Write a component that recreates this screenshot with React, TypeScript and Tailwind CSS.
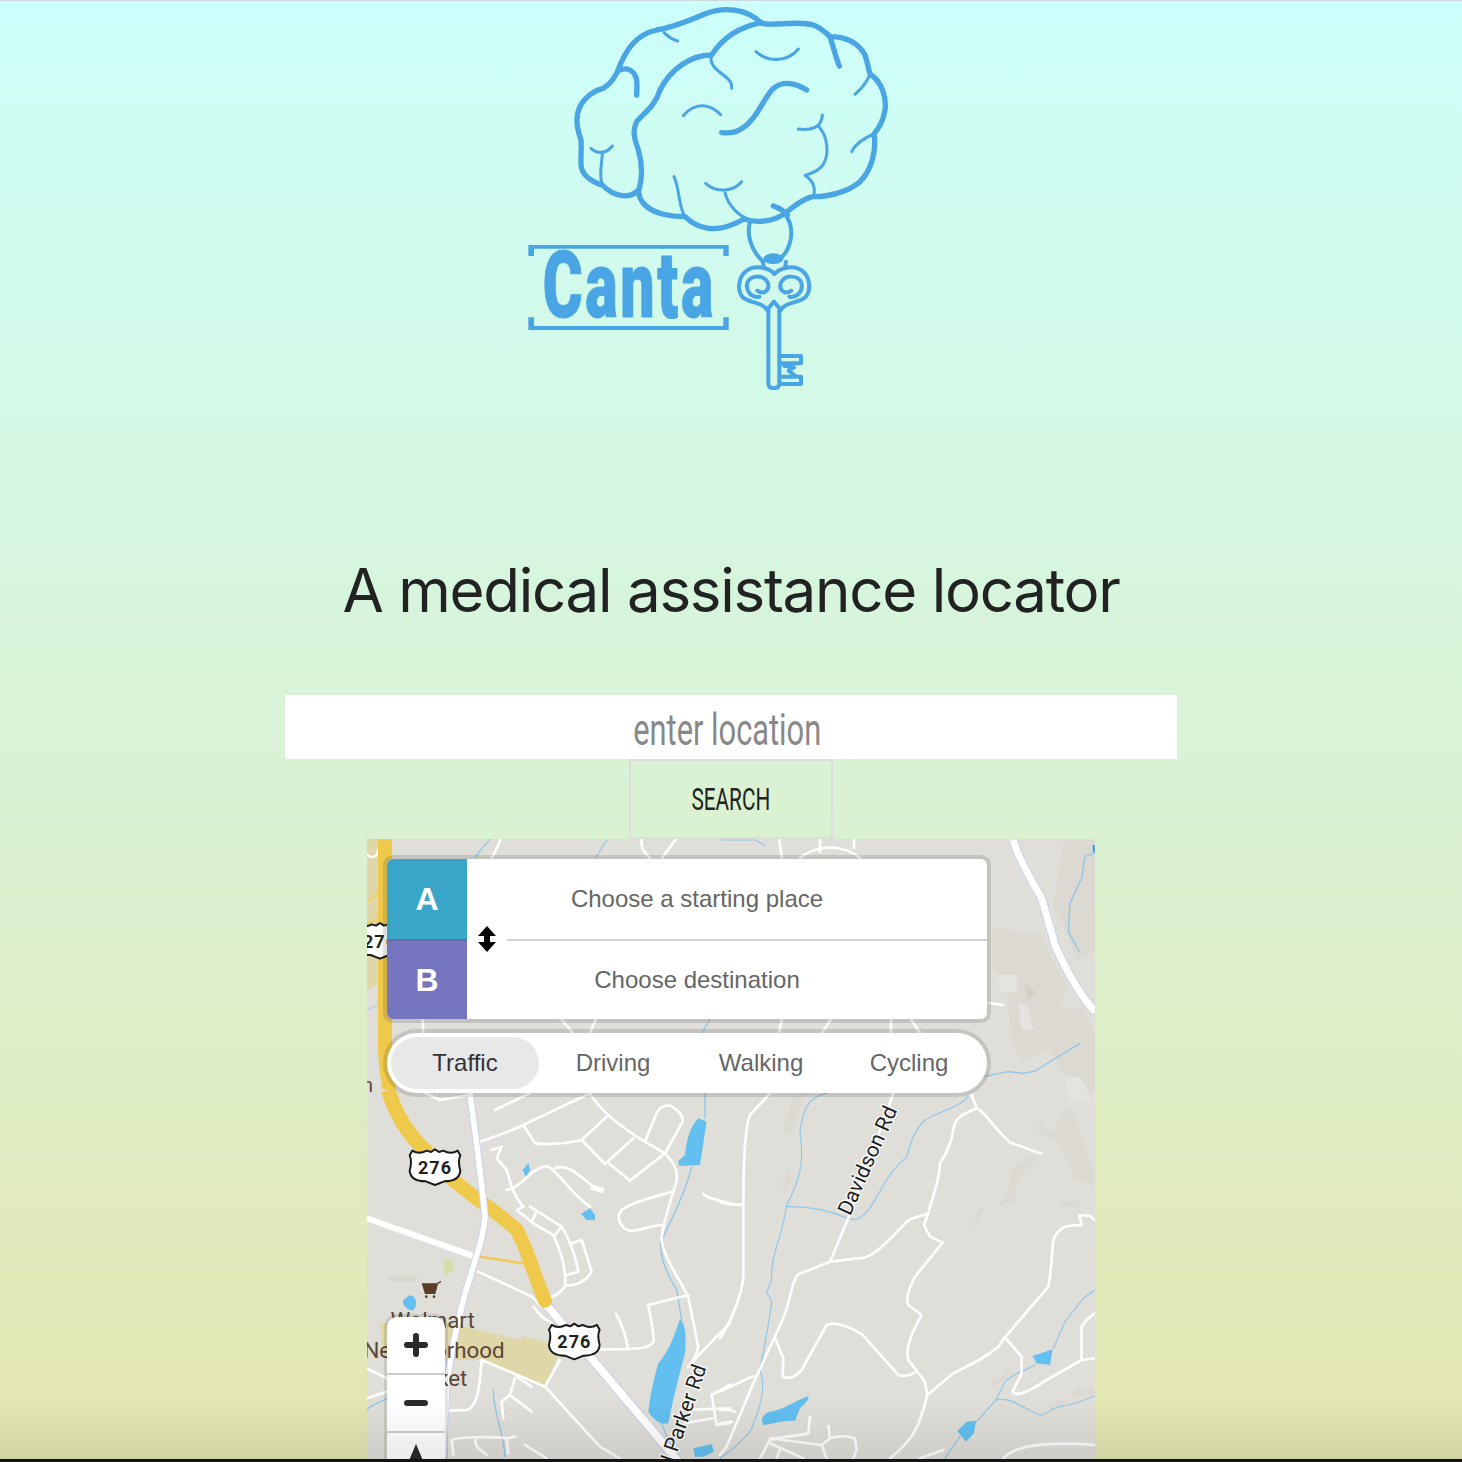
const BLUE = "#4aa5e5";

// paths below are traced in the coordinates of 3x crops, the <g> scales them back
const thickBrain = [
  "M245 555 C215 545 185 525 183 495 C182 470 185 440 183 420 C170 385 165 350 180 320 C195 290 225 270 250 265 C275 250 290 225 300 195 C320 150 345 105 410 90 C470 80 510 60 560 40 C610 20 680 25 725 70 C760 80 830 60 880 75 C905 85 920 100 930 110 C970 110 1010 120 1035 165 C1042 185 1045 205 1050 222 C1085 245 1100 290 1095 330 C1090 365 1075 385 1062 402 C1070 450 1055 510 1020 545 C985 575 930 590 880 590 C850 595 820 620 795 640 C760 665 710 670 672 657 C640 675 600 690 565 685 C530 680 510 665 495 650 C450 650 400 640 375 615 C360 600 358 590 355 570 C335 595 285 595 247 555",
  "M725 68 C660 80 610 110 575 165 C510 165 450 210 420 270 C405 320 370 340 350 365 C335 395 345 420 355 450 C370 500 365 540 357 570",
  "M930 110 C940 140 948 175 958 198",
  "M300 210 C325 200 345 215 350 240 C352 260 350 270 350 285",
  "M860 270 C830 250 790 240 760 265 C730 295 720 340 680 375 C650 400 630 400 605 398",
  "M760 618 C780 625 795 635 802 645",
];

const thinBrain = [
  "M575 165 C565 190 590 210 610 225 C630 240 637 250 635 265",
  "M1050 222 C1040 250 1020 270 1005 283",
  "M1062 402 C1030 415 1005 435 995 455",
  "M432 98 C445 110 460 120 473 123",
  "M708 155 C740 185 800 190 835 147",
  "M490 347 C525 305 570 310 602 344",
  "M835 387 C870 392 905 385 907 345",
  "M895 378 C925 410 930 470 905 500 C890 515 870 522 855 526 C875 540 890 560 880 590",
  "M462 530 C480 570 475 620 495 650",
  "M557 550 C590 580 640 575 665 545",
  "M615 578 C625 620 660 650 690 660",
  "M213 445 C235 465 260 460 277 438",
  "M247 455 C247 490 235 520 247 555",
];

const keyLines = [
  "M690 665 C680 700 690 750 730 785",
  "M800 650 C825 690 815 750 775 780",
  "M733 805 L728 785",
  "M795 805 L798 785",
  "M763 822 C745 800 700 795 680 812 C655 830 650 870 668 892 C690 910 730 905 745 935",
  "M763 822 C782 800 825 795 846 812 C870 830 875 870 856 892 C835 910 795 905 778 935",
  "M718 890 C692 895 676 870 682 848 C692 825 732 822 744 850 C750 872 730 885 712 872",
  "M808 890 C834 895 850 870 844 848 C834 825 794 822 782 850 C776 872 796 885 814 872",
  "M745 925 L745 1150 Q745 1165 762 1165 Q778 1165 778 1150 L778 925 L762 905 Z",
  "M778 1068 H843 V1090 H778",
  "M778 1130 H843 V1152 H778",
  "M792 1097 L822 1102 L806 1112 L826 1128",
];

function Logo() {
  return (
    <svg viewBox="0 3 1140 1197" className="ml-[520px] block h-[399px] w-[380px]" fill="none" stroke={BLUE} strokeLinecap="round" strokeLinejoin="round">
      {thickBrain.map((d) => (
        <path key={d} d={d} strokeWidth={16} />
      ))}
      {thinBrain.map((d) => (
        <path key={d} d={d} strokeWidth={9} />
      ))}
      {keyLines.map((d) => (
        <path key={d} d={d} strokeWidth={12} />
      ))}
      <ellipse cx={760} cy={776} rx={30} ry={16} fill={BLUE} stroke="none" />
      <path d="M25 768 V735 H626 V768 H610 V746 H42 V768 Z" fill={BLUE} stroke="none" />
      <path d="M25 952 V990 H626 V952 H610 V978 H42 V952 Z" fill={BLUE} stroke="none" />
      <text
        x={68}
        y={952}
        textLength={520}
        lengthAdjust="spacingAndGlyphs"
        fontSize={276}
        fontWeight={900}
        letterSpacing={12}
        fontFamily="Roboto, sans-serif"
        fill={BLUE}
        stroke={BLUE}
        strokeWidth={3}
      >
        Canta
      </text>
    </svg>
  );
}

const roadsLeft = [
  "M360 155 C420 135 480 110 490 105 L690 10",
  "M490 105 L525 160 C570 165 620 160 665 150 L740 80",
  "M665 150 L735 222 L820 145",
  "M690 10 C720 60 780 110 855 155 L915 190 C940 215 955 240 950 270 C945 300 905 400 905 450 C910 500 960 570 985 620 L1015 770 C1010 800 1000 810 985 830",
  "M855 155 L890 70 C900 50 915 45 930 47 C955 60 970 75 968 95 L915 190",
  "M915 190 L810 272 L745 218",
  "M940 305 C880 320 810 340 785 360 C765 385 785 420 815 423 C850 420 880 405 905 405",
  "M1030 312 C1050 330 1080 330 1110 340",
  "M865 645 L985 615",
  "M865 645 C875 700 885 745 880 755 C870 775 850 778 720 778",
  "M768 672 C790 710 800 750 805 778",
  "M395 180 L425 170 L410 205 L440 240 C450 270 455 310 490 350 L470 360 L520 400 L580 435 C600 480 620 530 615 590 C600 610 580 620 565 625",
  "M440 300 C490 290 510 235 560 228 C600 245 620 300 690 350",
  "M585 235 C620 220 650 250 700 290 L730 297 L725 305 L695 295",
  "M510 350 L605 410 L585 435",
  "M605 410 C630 450 650 510 655 545 L620 555",
  "M635 460 L665 450 L695 545 C680 575 640 590 618 585",
  "M530 365 L515 395",
  "M355 545 L515 620 L545 650",
  "M520 650 L545 680 L575 700",
  "M555 890 L600 810",
  "M365 810 L555 890 L720 1070 L780 1105",
  "M365 810 C360 880 355 950 320 960 L265 962",
  "M470 860 L515 890",
  "M465 865 L450 915 L425 935 L430 985",
  "M450 915 L515 965",
  "M20 835 L80 865",
  "M20 925 L80 905",
  "M280 1095 L275 1050 C300 1040 400 1040 440 1045 L465 1040",
  "M345 1045 L350 1070 L380 1095",
  "M440 1045 L445 1090",
  "M495 1065 L560 1105",
  "M1110 700 C1080 730 1020 790 985 830",
  "M1055 915 L1110 885",
  "M1055 915 L1070 1005 L1110 1000",
  "M965 960 L1110 955",
  "M975 1000 L1060 985",
];

const riversLeft = [
  "M1035 10 L1035 85",
  "M995 230 C980 300 930 400 905 450 C895 490 920 550 950 600 L965 690",
  "M905 1000 C920 1040 930 1060 960 1100",
  "M400 900 C400 970 430 1020 435 1100",
  "M20 960 C40 940 80 930 80 925",
];

const lakesLeft = [
  "M1015 85 L1040 95 L1020 225 L958 228 L955 212 L975 195 C980 150 990 110 1015 85Z",
  "M505 220 L510 240 L498 260 L488 240Z",
  "M690 355 L705 375 L705 390 L680 390 L663 372Z",
  "M150 615 C170 620 175 645 160 660 C140 665 125 640 130 630Z",
  "M960 688 C975 700 980 730 975 790 C965 830 945 900 925 1000 C895 1005 880 985 865 965 C870 920 880 870 895 820 C930 780 945 730 960 688Z",
  "M1000 1075 L1055 1062 L1062 1085 L1030 1100 L1005 1100Z",
];

const roadsRight = [
  "M150 10 L90 75 C75 110 70 200 70 345 L70 560 C65 620 30 700 0 745",
  "M0 335 C25 345 50 343 70 345",
  "M520 10 L385 385 L330 515",
  "M330 515 L435 503 C490 480 530 420 570 388 L625 370 C640 310 660 270 660 220 C680 190 695 160 700 120 C705 90 710 80 770 55 C790 60 810 100 870 158 C900 165 940 185 965 190",
  "M770 55 L755 15",
  "M625 370 L612 405 L630 440 L668 458 L585 560 C565 600 555 630 565 645 L605 675 C580 720 555 770 565 810 L615 875 L622 915 C600 1000 590 1040 510 1105",
  "M330 515 L235 553 C215 570 215 620 190 685 L100 880 L20 1070 L0 1095",
  "M165 745 L190 805 L188 860 C210 870 225 860 245 840 L320 705 C340 695 370 700 425 732 L535 855 C550 860 565 860 585 848",
  "M622 915 L700 850 C760 820 800 800 835 770 L855 742 L985 590 C995 540 995 490 1000 450 C1015 410 1040 405 1085 405 L1078 375 L1110 378 L1125 390",
  "M855 742 L905 800 L905 850 L878 905 C890 920 920 910 980 870 L1085 810 L1125 805",
  "M1085 810 L1085 710 C1095 690 1110 680 1125 670",
  "M0 905 L95 860 L105 860",
  "M0 960 C25 960 40 960 45 965",
  "M0 1000 L35 995",
  "M120 1105 L150 1050 C200 1035 240 1040 265 1030 L270 980",
  "M150 1045 L305 1065 L330 1045 C360 1035 390 1040 405 1045 L410 1080 L400 1105",
  "M305 1065 L320 1105",
  "M330 1045 L325 1008",
  "M150 1060 L250 1105",
  "M180 1080 L170 1105",
  "M850 1105 C890 1060 1000 1055 1125 1065",
  "M600 1105 L670 1080",
];

const riversRight = [
  "M320 10 C270 20 250 50 240 125 C250 200 250 250 200 345 C190 430 150 500 155 570 L140 605 L155 635 C145 720 130 780 120 840 C140 890 120 960 90 1025 C60 1060 30 1085 0 1105",
  "M200 350 C260 348 320 360 370 380 C400 395 420 390 440 365 C480 320 490 260 560 200 C570 170 575 130 615 90 C660 65 720 50 745 20",
  "M1125 600 L1090 625 L1035 695 L1000 775",
  "M945 825 C920 840 880 850 855 875 L828 930 L765 1000",
  "M720 1040 L675 1105",
  "M828 930 C870 920 900 950 960 975 C985 975 985 955 1020 950 C1060 945 1090 930 1125 918",
];

const lakesRight = [
  "M265 918 C270 930 250 945 240 955 L225 993 C190 990 150 1005 130 1005 C120 990 130 970 150 965 C190 960 220 935 265 918Z",
  "M938 798 L998 778 L990 825 L968 822 L950 820Z",
  "M712 1023 L740 995 L768 992 L762 1030 L738 1055Z",
];

const patchesRight = [
  "M220 20 L255 10 L215 130 L190 125Z",
  "M210 235 L185 280 L195 315 L212 270Z",
  "M960 195 L930 200 L875 240 L860 320 L830 350 L880 340 L895 270Z",
  "M805 350 L775 355 L760 410 L740 425 L770 415 L785 370Z",
  "M1020 340 L1080 330 L1075 345 L1020 355Z",
  "M860 845 L815 880 L820 895 L860 860Z",
  "M1055 905 L1125 890 V915 L1060 922Z",
  "M975 935 L1040 930 V945 L985 950Z",
  "M940 90 L1000 130 L1030 60 L1060 60 L1090 160 L1125 260 V290 L1060 260 L1020 160 L960 130Z",
];

// top strip and gaps round the panels, in page coordinates
const roadsTop = [
  "M501 839 L492 858",
  "M676 839 L662 858",
  "M642 839 C640 848 644 852 650 858",
  "M779 839 L782 858",
  "M820 839 L820 852",
  "M854 839 L854 848",
  "M800 858 C815 846 840 842 860 858",
  "M561 1019 L573 1033",
  "M596 1019 L590 1033",
  "M423 1019 V1033",
  "M782 1019 L779 1033",
  "M831 1019 L822 1033",
  "M891 1019 V1033",
  "M911 1019 L920 1033",
  "M989 1003 L1003 1005",
  "M530 1093 L495 1110",
  "M425 1093 L440 1100 L470 1095",
  "M367 855 C374 860 378 855 378 850",
];

function Shield({ x, y, label }: { x: number; y: number; label: string }) {
  return (
    <g transform={`translate(${x} ${y})`}>
      <path
        d="M-68 -50 C-55 -42 -40 -42 -25 -50 L-12 -46 L0 -54 L12 -46 L25 -50 C40 -42 55 -42 68 -50 L76 -36 C68 -20 72 -5 76 10 C74 35 50 42 28 42 L0 53 L-28 42 C-50 42 -74 35 -76 10 C-72 -5 -68 -20 -76 -36Z"
        fill="#fff"
        stroke="#1a1a1a"
        strokeWidth={6}
        strokeLinejoin="round"
      />
      <text x={0} y={20} textAnchor="middle" fontSize={54} fontWeight={700} letterSpacing={3} fontFamily="Roboto, sans-serif" fill="#1f1f1f">
        {label}
      </text>
    </g>
  );
}

function MapCanvas() {
  return (
    <svg viewBox="367 839 728 623" className="absolute inset-0 h-full w-full" fill="none" strokeLinecap="round" strokeLinejoin="round">
      <rect x={367} y={839} width={728} height={623} fill="#e0ded9" />

      <g transform="translate(980 835) scale(0.3333)">
        <path d="M40 280 L70 280 L120 300 L180 290 L210 360 L260 450 L240 520 L310 520 L345 600 V760 L300 800 L250 720 L210 640 L130 680 L100 640 L80 480 L40 400Z" fill="#dbd9d1" />
        <path d="M250 15 L345 15 V350 L290 380 L245 260 L220 220 L240 90Z" fill="#dbd9d1" />
        <path d="M45 420 H110 V470 H60Z M115 505 H140 L160 585 H125Z M255 725 H300 L340 800 H270Z" fill="#e4e3df" />
        <path d="M135 450 L168 470 L145 495Z" fill="#d2cfc4" />
        <path d="M340 55 L315 65 L305 130 L270 205 L265 290 L298 350" stroke="#8fc5e6" strokeWidth={4} />
        <path d="M300 625 L165 708 L130 715 L85 710 L0 727" stroke="#8fc5e6" strokeWidth={4} />
        <path d="M100 15 C110 60 150 130 185 190 L225 330 C260 410 300 480 345 530" stroke="#cdd3e8" strokeWidth={27} strokeLinecap="butt" />
        <path d="M100 15 C110 60 150 130 185 190 L225 330 C260 410 300 480 345 530" stroke="#fff" strokeWidth={21} strokeLinecap="butt" />
        <path d="M338 30 L345 30 V55 L338 50Z" fill="#4aa3ee" />
      </g>

      <path d="M367 839 H378 V985 L367 990Z" fill="#e0d7a8" />
      <path d="M367 1010 L385 1002" stroke="#9cc8e6" strokeWidth={1} />
      <path d="M367 900 C373 900 378 895 378 890 M367 924 L378 918" stroke="#f3cf5f" strokeWidth={2} />

      <g transform="translate(360 1090) scale(0.3333)">
        <path d="M60 700 L270 700 L480 750 L490 738 L605 770 L555 890 L365 810 L260 810 L70 790Z" fill="#dfd7a7" />
        <path d="M250 510 L275 510 L285 535 L255 560Z" fill="#d5dca8" />
        <path d="M80 560 H180 L160 575 H100Z" fill="#d8d5cb" />
        {riversLeft.map((d) => (
          <path key={d} d={d} stroke="#8cc6ea" strokeWidth={4} />
        ))}
        {lakesLeft.map((d) => (
          <path key={d} d={d} fill="#62bff0" />
        ))}
        {roadsLeft.map((d) => (
          <path key={d} d={d} stroke="#fff" strokeWidth={8} />
        ))}
        <path d="M555 640 L960 1120" stroke="#cdd3e8" strokeWidth={30} />
        <path d="M555 640 L960 1120" stroke="#fff" strokeWidth={23} />
        <path d="M20 385 L345 500" stroke="#fff" strokeWidth={18} strokeLinecap="butt" />
        <path d="M358 500 L490 520" stroke="#efc94c" strokeWidth={7} />
        <path d="M85 0 C105 70 140 130 200 185" stroke="#efc94c" strokeWidth={44} strokeLinecap="butt" />
        <path d="M200 185 C225 210 250 240 280 270 C350 330 430 380 470 420 C500 470 520 550 555 632" stroke="#efc94c" strokeWidth={42} />
        <path d="M330 10 C345 120 365 280 375 380 C370 450 350 490 340 530 C310 620 280 740 260 880 L250 1100" stroke="#cdd3e8" strokeWidth={23} />
        <path d="M330 10 C345 120 365 280 375 380 C370 450 350 490 340 530 C310 620 280 740 260 880 L250 1100" stroke="#fff" strokeWidth={17} />
        <g fill="#5c3d28" stroke="none">
          <path d="M185 580 H230 L243 572 V577 L234 582 L226 612 H195Z" />
          <circle cx={199} cy={620} r={4} />
          <circle cx={222} cy={620} r={4} />
        </g>
        <g fontSize={67} fontFamily="Roboto, sans-serif" fill="#5b4638" textAnchor="middle">
          <text x={218} y={714}>Walmart</text>
          <text x={222} y={803}>Neighborhood</text>
          <text x={218} y={888}>Market</text>
        </g>
        <Shield x={225} y={232} label="276" />
        <Shield x={643} y={755} label="276" />
      </g>

      <g transform="translate(720 1090) scale(0.3333)">
        {patchesRight.map((d) => (
          <path key={d} d={d} fill="#dbd9d1" />
        ))}
        {riversRight.map((d) => (
          <path key={d} d={d} stroke="#8cc6ea" strokeWidth={3.5} />
        ))}
        {lakesRight.map((d) => (
          <path key={d} d={d} fill="#62bff0" />
        ))}
        {roadsRight.map((d) => (
          <path key={d} d={d} stroke="#fff" strokeWidth={8} />
        ))}
      </g>

      {roadsTop.map((d) => (
        <path key={d} d={d} stroke="#fff" strokeWidth={2.6} />
      ))}
      <path d="M475 857 L490 839 M607 840 L596 857 M722 840 H756 L765 846 M710 1019 L702 1033" stroke="#8cc6ea" strokeWidth={1.2} />
      <path d="M385 839 L385 1040 C385 1075 390 1085 389 1090" stroke="#efc94c" strokeWidth={14} strokeLinecap="butt" />

      <g transform="translate(305 941) scale(0.3333)">
        <Shield x={225} y={0} label="276" />
      </g>
      <text x={362} y={1092} fontSize={20} fontFamily="Roboto, sans-serif" fill="#5b4638">n</text>

      <text
        transform="translate(893 1108) rotate(-66)"
        textAnchor="end"
        fontSize={21}
        fontFamily="Roboto, sans-serif"
        fill="#222"
        stroke="#fff"
        strokeWidth={2.5}
        paintOrder="stroke"
        x={0}
        y={5}
      >
        Davidson Rd
      </text>
      <text
        transform="translate(702 1366) rotate(-71)"
        textAnchor="end"
        fontSize={21}
        fontFamily="Roboto, sans-serif"
        fill="#222"
        stroke="#fff"
        strokeWidth={2.5}
        paintOrder="stroke"
        x={0}
        y={5}
      >
        N Parker Rd
      </text>
    </svg>
  );
}

function SwapIcon() {
  return (
    <svg viewBox="0 0 20 26" className="h-[26px] w-[20px]" fill="#000">
      <path d="M10 0 L19 10 H13 V16 H19 L10 26 L1 16 H7 V10 H1Z" />
    </svg>
  );
}

function Directions() {
  return (
    <div className="flex h-[160px] w-[600px] overflow-hidden rounded-[6px] bg-white shadow-[0_0_0_4px_rgba(0,0,0,0.12)]">
      <div className="flex w-[80px] flex-col text-[32px] font-bold text-white">
        <div className="flex h-[80px] items-center justify-center bg-[#39a5c9]">A</div>
        <div className="flex h-[80px] items-center justify-center border-t-2 border-[#6a68b0] bg-[#7575bf]">B</div>
      </div>
      <div className="flex w-[40px] items-center justify-center">
        <SwapIcon />
      </div>
      <div className="flex flex-1 flex-col text-[24px] text-[#666]">
        <div className="flex h-[82px] items-center justify-center border-b-2 border-[#d0d0d0] pr-[100px]">
          <span>Choose a starting place</span>
        </div>
        <div className="flex h-[78px] items-center justify-center pr-[100px]">
          <span>Choose destination</span>
        </div>
      </div>
    </div>
  );
}

function Modes() {
  const modes = ["Traffic", "Driving", "Walking", "Cycling"];

  return (
    <div className="mt-[14px] flex h-[60px] w-[600px] items-center rounded-full bg-white px-[4px] shadow-[0_0_0_4px_rgba(0,0,0,0.12)]">
      {modes.map((m, i) => (
        <button
          key={m}
          className={
            i === 0
              ? "h-[52px] w-[148px] rounded-[26px] bg-[#e8e8e8] text-[24px] text-[#333]"
              : "h-[52px] w-[148px] rounded-[26px] text-[24px] text-[#666]"
          }
        >
          {m}
        </button>
      ))}
    </div>
  );
}

function ZoomControls() {
  return (
    <div className="mt-[224px] flex w-[58px] flex-col rounded-t-[10px] bg-white shadow-[0_0_0_3px_rgba(0,0,0,0.1)]">
      <div className="flex h-[58px] items-center justify-center border-b-2 border-[#ccc]">
        <svg viewBox="0 0 24 24" className="h-[24px] w-[24px]" stroke="#2b2b2b" strokeWidth={6} strokeLinecap="round">
          <path d="M3 12 H21 M12 3 V21" />
        </svg>
      </div>
      <div className="flex h-[58px] items-center justify-center border-b-2 border-[#ccc]">
        <svg viewBox="0 0 24 6" className="h-[6px] w-[24px]" stroke="#2b2b2b" strokeWidth={6} strokeLinecap="round">
          <path d="M3 3 H21" />
        </svg>
      </div>
      <div className="flex h-[58px] justify-center pt-[11px]">
        <svg viewBox="0 0 22 26" className="h-[26px] w-[22px]" fill="#2b2b2b">
          <path d="M11 0 L22 26 H0Z" />
        </svg>
      </div>
    </div>
  );
}

export default function App() {
  return (
    <div className="relative h-[1462px] w-full overflow-hidden border-t border-[#cfd8dc] bg-gradient-to-b from-[#ccfffa] to-[#e4e6b0] font-['Liberation_Sans',Arial,sans-serif]">
      <Logo />

      <h1 className="mt-[154px] text-center font-['Inter',sans-serif] text-[60px] leading-[72px] font-normal tracking-[-1.25px] text-[#222]">
        A medical assistance locator
      </h1>

      <div className="mx-auto mt-[69px] flex h-[64px] w-[892px] items-center justify-center bg-white pt-[5px] pr-2">
        <span className="inline-block scale-x-[0.7] font-['Roboto',sans-serif] text-[44px] font-normal text-[#888]">enter location</span>
      </div>

      <button className="mx-auto flex h-[80px] w-[204px] items-center justify-center border-2 border-[#dcdcdc] pt-[2px]">
        <span className="inline-block scale-x-[0.67] font-['Roboto',sans-serif] text-[31px] font-normal text-[#222]">SEARCH</span>
      </button>

      <div className="relative mx-auto h-[623px] w-[728px] overflow-hidden">
        <MapCanvas />
        <div className="relative flex flex-col pt-[20px] pl-[20px]">
          <Directions />
          <Modes />
          <ZoomControls />
        </div>
      </div>

      <div className="pointer-events-none absolute inset-x-0 bottom-[3px] h-[60px] bg-gradient-to-b from-transparent to-[rgba(0,0,0,0.08)]" />
      <div className="absolute inset-x-0 bottom-0 h-[3px] bg-[#141414]" />
    </div>
  );
}
